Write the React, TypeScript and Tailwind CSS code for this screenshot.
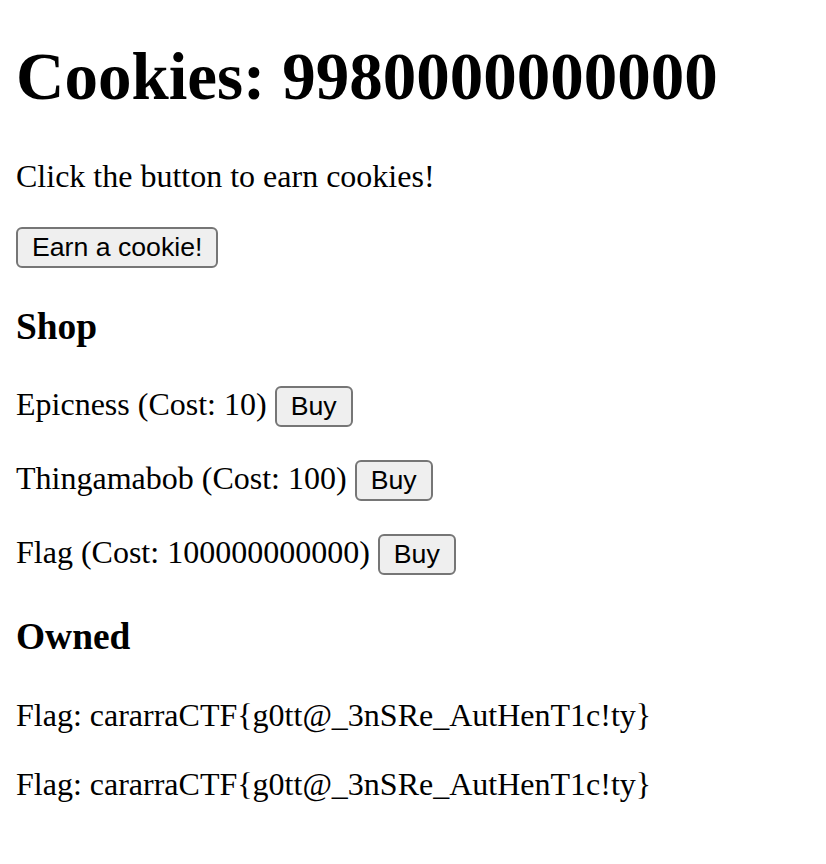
import React from "react";

const btn =
  "inline-block align-baseline bg-[#efefef] border-2 border-[#767676] rounded-[6px] px-[14px] py-[3px] text-[26.67px] leading-[normal] text-black font-['Liberation_Sans',Arial,sans-serif]";

export default function App() {
  return (
    <div className="bg-white text-black min-h-[864px] px-[16px] py-[1px] font-['Liberation_Serif','Times_New_Roman',serif] text-[32px] leading-[normal]">
      <h1 className="text-[67px] font-bold mt-[37px] mb-[43px] leading-[normal]">Cookies: 9980000000000</h1>
      <p className="my-[32px]">Click the button to earn cookies!</p>
      <p className="mt-[32px] mb-[35px]">
        <button className={btn}>Earn a cookie!</button>
      </p>
      <h3 className="text-[37.44px] font-bold my-[37.44px] leading-[normal]">Shop</h3>
      <div>
        <p className="my-[32px] pb-[1px]">
          Epicness (Cost: 10) <button className={btn}>Buy</button>
        </p>
        <p className="my-[32px] pb-[1px]">
          Thingamabob (Cost: 100) <button className={btn}>Buy</button>
        </p>
        <p className="my-[32px] pb-[3px]">
          Flag (Cost: 100000000000) <button className={btn}>Buy</button>
        </p>
      </div>
      <h3 className="text-[37.44px] font-bold mt-[37.44px] mb-[38.5px] leading-[normal]">Owned</h3>
      <div>
        <p className="my-[32px]">Flag: cararraCTF{"{"}g0tt@_3nSRe_AutHenT1c!ty{"}"}</p>
        <p className="my-[32px]">Flag: cararraCTF{"{"}g0tt@_3nSRe_AutHenT1c!ty{"}"}</p>
      </div>
    </div>
  );
}
